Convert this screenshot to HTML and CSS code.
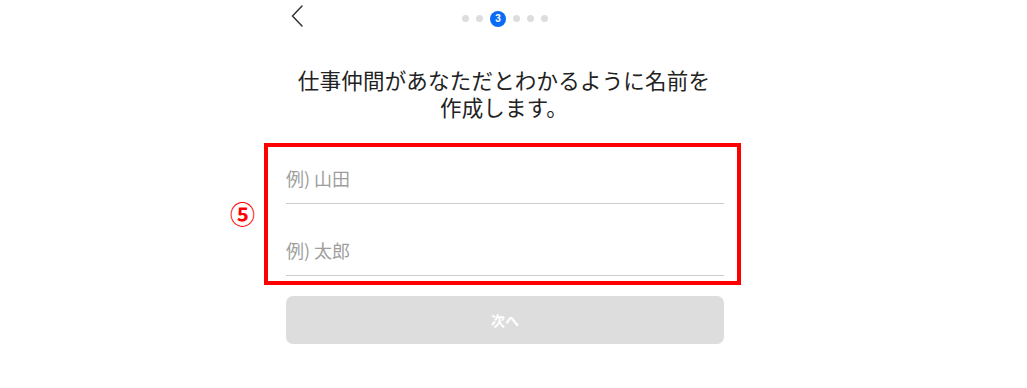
FILE: index.html
```html
<!DOCTYPE html>
<html lang="ja">
<head>
<meta charset="utf-8">
<title>名前の作成</title>
<link rel="stylesheet" href="styles.css">
</head>
<body>
<main class="screen">
  <header class="topbar">
    <button class="back" aria-label="戻る">
      <svg width="12" height="22" viewBox="0 0 12 22"><path d="M11 1 L1.5 11 L11 21" fill="none" stroke="#333" stroke-width="1.5" stroke-linecap="round" stroke-linejoin="round"/></svg>
    </button>
    <ol class="steps">
      <li class="dot"></li>
      <li class="dot"></li>
      <li class="dot current">3</li>
      <li class="dot"></li>
      <li class="dot"></li>
      <li class="dot"></li>
    </ol>
    <span></span>
  </header>

  <h1 class="title"><span class="line">仕事仲間があなただとわかるように名前を</span><span class="line">作成します。</span></h1>

  <form class="fields">
    <input class="field" type="text" placeholder="例) 山田">
    <input class="field second" type="text" placeholder="例) 太郎">
    <div class="highlight"></div>
    <span class="marker">⑤</span>
  </form>

  <button class="next" type="button">次へ</button>
</main>
</body>
</html>
```

FILE: styles.css
```css
* { box-sizing: border-box; }

html, body {
  margin: 0;
  background: #ffffff;
}

body {
  font-family: "Noto Sans CJK JP", "Noto Sans", sans-serif;
  color: #222222;
}

.screen {
  width: 438px;
  margin-left: 286px;
}

.topbar {
  display: grid;
  grid-template-columns: 1fr auto 1fr;
  align-items: center;
  height: 37px;
}

.back {
  justify-self: start;
  display: flex;
  align-items: center;
  padding: 0 0 0 5px;
  margin: 0;
  border: none;
  background: none;
  height: 30px;
  position: relative;
  top: -3px;
}

.steps {
  display: flex;
  align-items: center;
  gap: 7px;
  list-style: none;
  margin: 0;
  padding: 0;
}

.dot {
  width: 7px;
  height: 7px;
  border-radius: 50%;
  background: #dddddd;
}

.dot.current {
  width: 16px;
  height: 16px;
  background: #0a6cf5;
  color: #ffffff;
  font-family: "Liberation Sans", sans-serif;
  font-weight: bold;
  font-size: 10px;
  line-height: 16px;
  text-align: center;
}

.title {
  margin: 29px 0 0;
  font-size: 21.5px;
  font-weight: normal;
  line-height: 27px;
  text-align: center;
  color: #222222;
  letter-spacing: 0.2px;
  transform: translateX(-1px);
}

.title .line {
  display: block;
  height: 27px;
}

.fields {
  position: relative;
  margin: 38px 0 0;
}

.field {
  display: block;
  width: 100%;
  height: 46px;
  padding: 0 0 5px;
  border: none;
  border-bottom: 1px solid #cccccc;
  font-family: "Noto Sans CJK JP", sans-serif;
  font-size: 18px;
  color: #222222;
  background: transparent;
  outline: none;
}

.field::placeholder {
  color: #9e9e9e;
}

.field.second {
  margin-top: 26px;
}

.highlight {
  position: absolute;
  left: -22px;
  top: -15px;
  width: 477px;
  height: 142px;
  border: 4px solid #ff0000;
  pointer-events: none;
}

.marker {
  position: absolute;
  left: -56px;
  top: 40px;
  font-size: 25px;
  line-height: 30px;
  font-weight: bold;
  color: #ff0000;
}

.next {
  display: block;
  width: 100%;
  height: 48px;
  margin-top: 20px;
  border: none;
  border-radius: 7px;
  background: #dddddd;
  color: #ffffff;
  font-family: "Noto Sans CJK JP", sans-serif;
  font-size: 14px;
  font-weight: bold;
}
```
